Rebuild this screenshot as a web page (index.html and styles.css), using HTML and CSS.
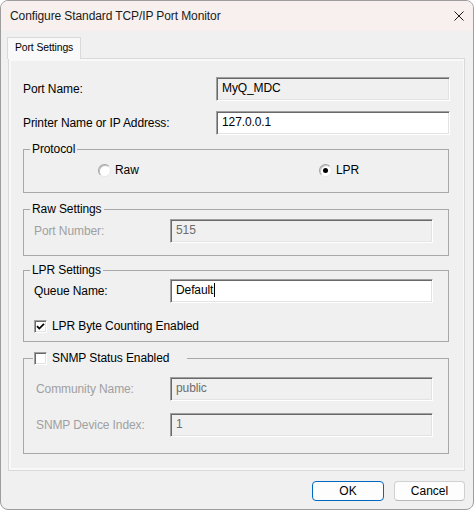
FILE: index.html
```html
<!DOCTYPE html>
<html lang="en">
<head>
<meta charset="utf-8">
<title>Configure Standard TCP/IP Port Monitor</title>
<link rel="stylesheet" href="styles.css">
</head>
<body>
<div class="window">
  <header class="titlebar">
    <span class="title">Configure Standard TCP/IP Port Monitor</span>
    <svg class="close" viewBox="0 0 10 10" aria-label="Close">
      <path d="M0.5 0.5 L9.5 9.5 M9.5 0.5 L0.5 9.5" stroke="#1a1a1a" stroke-width="1" fill="none"/>
    </svg>
  </header>

  <main class="client">
    <div class="tabs">
      <div class="tab">Port Settings</div>
    </div>

    <div class="tab-body">
      <div class="page">
        <div class="row">
          <span class="label">Port Name:</span>
          <div class="edit readonly">MyQ_MDC</div>
        </div>
        <div class="row">
          <span class="label">Printer Name or IP Address:</span>
          <div class="edit">127.0.0.1</div>
        </div>

        <fieldset class="group protocol">
          <legend>Protocol</legend>
          <div class="radios">
            <label class="radio"><span class="radio-box"></span>Raw</label>
            <label class="radio"><span class="radio-box checked"></span>LPR</label>
          </div>
        </fieldset>

        <fieldset class="group raw">
          <legend>Raw Settings</legend>
          <div class="grow">
            <span class="label disabled">Port Number:</span>
            <div class="edit disabled">515</div>
          </div>
        </fieldset>

        <fieldset class="group lpr">
          <legend>LPR Settings</legend>
          <div class="grow">
            <span class="label">Queue Name:</span>
            <div class="edit">Default<span class="caret"></span></div>
          </div>
          <label class="check byte-count">
            <span class="check-box">
              <svg viewBox="0 0 11 11"><path d="M2 5.2 L4.3 7.6 L9 2.8" stroke="#000" stroke-width="1.7" fill="none"/></svg>
            </span>
            LPR Byte Counting Enabled
          </label>
        </fieldset>

        <fieldset class="group snmp">
          <legend class="check-legend">
            <span class="check-box"></span>
            SNMP Status Enabled
          </legend>
          <div class="grow">
            <span class="label disabled indent">Community Name:</span>
            <div class="edit disabled">public</div>
          </div>
          <div class="grow">
            <span class="label disabled indent">SNMP Device Index:</span>
            <div class="edit disabled">1</div>
          </div>
        </fieldset>
      </div>
    </div>

    <div class="buttons">
      <button class="btn ok">OK</button>
      <button class="btn cancel">Cancel</button>
    </div>
  </main>
</div>
</body>
</html>
```

FILE: styles.css
```css
* {
  box-sizing: border-box;
}

html,
body {
  margin: 0;
  padding: 0;
}

body {
  background: #ffffff;
  font-family: "Liberation Sans", Arial, sans-serif;
  font-size: 12px;
  letter-spacing: -0.1px;
  color: #000;
}

/* dialog frame */
.window {
  width: 474px;
  height: 510px;
  border: 1px solid #9d9d9d;
  border-radius: 8px;
  overflow: hidden;
  background: #f0f0f0;
  display: flex;
  flex-direction: column;
}

.titlebar {
  height: 30px;
  flex: none;
  display: flex;
  align-items: center;
  padding: 0 9px 0 9px;
  background: #f7f0ee;
}

.title {
  color: #1b1b1b;
}

.close {
  margin-left: auto;
  width: 10px;
  height: 10px;
}

.client {
  flex: 1;
  display: flex;
  flex-direction: column;
  padding: 6px 8px 8px 7px;
}

/* tab strip */
.tabs {
  display: flex;
  height: 22px;
  margin-bottom: -1px;
  position: relative;
  z-index: 1;
}

.tab {
  margin-left: -1px;
  height: 22px;
  padding: 0 7px;
  border: 1px solid #d9d9d9;
  border-bottom: none;
  background: #f9f9f9;
  font-size: 10.4px;
  line-height: 20px;
}

.tab-body {
  flex: 1;
  display: flex;
  border: 1px solid #d9d9d9;
  background: #f9f9f9;
  padding: 2px;
}

.page {
  flex: 1;
  background: #f0f0f0;
  padding: 16px 13px 14px 12px;
}

/* label + edit rows */
.row {
  display: grid;
  grid-template-columns: 193px 234px;
  align-items: center;
}

.row + .row {
  margin-top: 10px;
}

.grow {
  display: grid;
  grid-template-columns: 136px 263px;
  align-items: center;
}

.label.disabled {
  color: #a0a0a0;
}

.label.indent {
  padding-left: 2px;
}

.edit {
  height: 24px;
  display: flex;
  align-items: center;
  padding: 0 5px 2px 5px;
  background: #ffffff;
  border: 1px solid;
  border-color: #a0a0a0 #ffffff #ffffff #a0a0a0;
  box-shadow: inset 1px 1px 0 #696969, inset -1px -1px 0 #e3e3e3;
  white-space: nowrap;
}

.edit.readonly {
  background: #f0f0f0;
}

.edit.disabled {
  background: #f0f0f0;
  color: #6d6d6d;
}

.caret {
  display: inline-block;
  width: 1px;
  height: 14px;
  background: #000;
  margin-left: 1px;
}

/* group boxes */
.group {
  width: 426px;
  margin: 0;
  min-width: 0;
  border: 1px solid #a8a8a8;
  padding: 0 10px;
}

.group legend {
  margin-left: -4px;
  padding: 0 2px;
  height: 16px;
  line-height: 16px;
}

.protocol {
  margin-top: 6px;
  padding-top: 5px;
  padding-bottom: 14px;
}

.raw {
  margin-top: 8px;
  padding-top: 2px;
  padding-bottom: 12px;
}

.lpr {
  margin-top: 6px;
  padding-top: 1px;
  padding-bottom: 7px;
}

.snmp {
  margin-top: 8px;
  padding-top: 11px;
  padding-bottom: 16px;
}

.snmp .grow + .grow {
  margin-top: 12px;
}

/* radio buttons */
.radios {
  display: grid;
  grid-template-columns: 221px auto;
  padding-left: 64px;
  height: 16px;
  align-items: center;
}

.radio {
  display: flex;
  align-items: center;
  gap: 4px;
}

.radio-box {
  position: relative;
  width: 13px;
  height: 13px;
  border-radius: 50%;
  background: #ffffff;
  border: 1px solid;
  border-color: #a0a0a0 #e8e8e8 #e8e8e8 #a0a0a0;
  box-shadow: inset 1px 1px 0 #c4c4c4;
}

.radio-box.checked::after {
  content: "";
  position: absolute;
  left: 3px;
  top: 3px;
  width: 5px;
  height: 5px;
  border-radius: 50%;
  background: #000;
}

/* check boxes */
.check {
  display: flex;
  align-items: center;
  gap: 5px;
  height: 16px;
}

.byte-count {
  margin-top: 15px;
}

.check-box {
  width: 13px;
  height: 13px;
  flex: none;
  background: #ffffff;
  border: 1px solid;
  border-color: #a0a0a0 #ffffff #ffffff #a0a0a0;
  box-shadow: inset 1px 1px 0 #696969, inset -1px -1px 0 #e3e3e3;
  display: flex;
  align-items: center;
  justify-content: center;
}

.check-box svg {
  width: 11px;
  height: 11px;
}

.group .check-legend {
  display: flex;
  align-items: center;
  gap: 5px;
  margin-left: -1px;
  padding: 0 18px 0 1px;
}

/* dialog buttons */
.buttons {
  display: flex;
  justify-content: flex-end;
  gap: 10px;
  margin-top: 10px;
}

.btn {
  height: 20px;
  padding: 0;
  font: inherit;
  color: #000;
  background: #fdfdfd;
  border: 1px solid #d0d0d0;
  border-bottom-color: #b8b8b8;
  border-radius: 4px;
}

.btn.ok {
  width: 72px;
  border-color: #0067c0;
}

.btn.cancel {
  width: 71px;
}
```
